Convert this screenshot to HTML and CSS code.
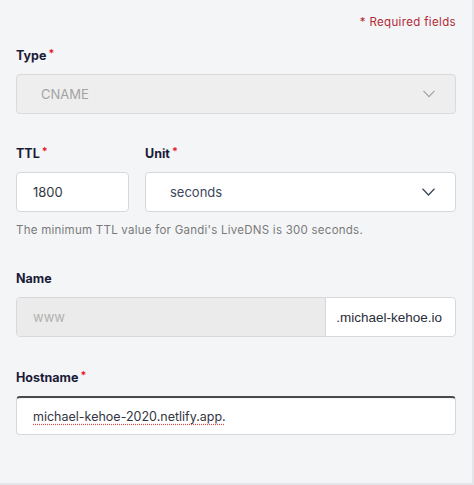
FILE: index.html
```html
<!DOCTYPE html>
<html>
<head>
<meta charset="utf-8">
<link rel="stylesheet" href="styles.css">
</head>
<body>
<div class="panel">
  <div class="required-note">* Required fields</div>

  <div class="field field-type">
    <div class="label">Type<span class="star">*</span></div>
    <div class="control select disabled">
      <span class="value">CNAME</span>
      <svg class="chev" width="12" height="8" viewBox="0 0 12 8"><path d="M0.5 0.8 L6 6.6 L11.5 0.8" fill="none" stroke="currentColor" stroke-width="1.1"/></svg>
    </div>
  </div>

  <div class="row">
    <div class="field ttl">
      <div class="label">TTL<span class="star">*</span></div>
      <div class="control input"><span class="value">1800</span></div>
    </div>
    <div class="field unit">
      <div class="label">Unit<span class="star">*</span></div>
      <div class="control select">
        <span class="value">seconds</span>
        <svg class="chev" width="13" height="8" viewBox="0 0 13 8"><path d="M0.5 0.8 L6.5 7 L12.5 0.8" fill="none" stroke="currentColor" stroke-width="1.3"/></svg>
      </div>
    </div>
  </div>
  <div class="hint">The minimum TTL value for Gandi's LiveDNS is 300 seconds.</div>

  <div class="field field-name">
    <div class="label">Name</div>
    <div class="control group">
      <div class="group-main"><span class="value">www</span></div>
      <div class="group-suffix">.michael-kehoe.io</div>
    </div>
  </div>

  <div class="field field-host">
    <div class="label">Hostname<span class="star">*</span></div>
    <div class="control input focus"><span class="value spell">michael-kehoe-2020.netlify.app.</span></div>
  </div>
</div>
</body>
</html>
```

FILE: styles.css
```css
* { box-sizing: border-box; }
html, body { margin: 0; padding: 0; }
body {
  background: #ffffff;
  font-family: "Inter", "Open Sans", sans-serif;
}
.panel {
  width: 474px;
  height: 485px;
  background: #f4f5f7;
  border-right: 2px solid #e3e5e9;
  border-bottom: 2px solid #e3e5e9;
  padding: 14px 16px 0 16px;
  display: flex;
  flex-direction: column;
}
.required-note {
  align-self: flex-end;
  font-size: 11.5px;
  line-height: 16px;
  color: #b22a35;
  letter-spacing: 0.35px;
}
.field { display: flex; flex-direction: column; }
.field-type { margin-top: 18px; }
.label {
  font-size: 12.5px;
  line-height: 16px;
  font-weight: 700;
  color: #1b1b38;
  margin-bottom: 10px;
  display: flex;
  align-items: flex-start;
}
.star {
  color: #e8152b;
  font-weight: 700;
  margin-left: 2px;
  font-size: 10.5px;
  line-height: 12px;
}
.control {
  height: 40px;
  border: 1px solid #d6d8db;
  border-radius: 4px;
  background: #ffffff;
  display: flex;
  align-items: center;
  font-size: 13px;
}
.control .value { color: #333641; }
.select { padding: 0 19px 0 24px; justify-content: space-between; }
.select .value { color: #3c4759; }
.select .chev { color: #3c4759; }
.select.disabled { background: #eeeeee; border-color: #dadada; }
.select.disabled .value { color: #a3a3a3; }
.select.disabled .chev { color: #a0a0a0; margin-right: 1px; }
.row {
  display: flex;
  gap: 16px;
  margin-top: 32px;
}
.ttl { width: 113px; }
.unit { flex: 1; }
.input { padding: 0 16px; }
.unit .select { padding-left: 24px; padding-right: 20px; }
.hint {
  margin-top: 11px;
  font-size: 11.5px;
  line-height: 14px;
  color: #7a7a7a;
  letter-spacing: 0.25px;
}
.field-name { margin-top: 34px; }
.group { overflow: hidden; }
.group-main {
  flex: 1;
  height: 100%;
  background: #ebebeb;
  border-right: 1px solid #d6d8db;
  display: flex;
  align-items: center;
  padding-left: 16px;
}
.group-main .value { color: #b1b1b1; }
.group-suffix {
  padding: 0 13px 0 10px;
  font-family: "Liberation Sans", Arial, sans-serif;
  font-size: 13.5px;
  color: #2b2d3a;
}
.field-host { margin-top: 33px; }
.focus {
  height: 39px;
  border-top: 2px solid #4a4a4a;
  box-shadow: inset 0 1px 1px rgba(0,0,0,0.05);
}
.spell {
  font-size: 12.5px;
  color: #3a3a3a;
  text-decoration: underline dotted #e05050;
  text-underline-offset: 3px;
}
```
